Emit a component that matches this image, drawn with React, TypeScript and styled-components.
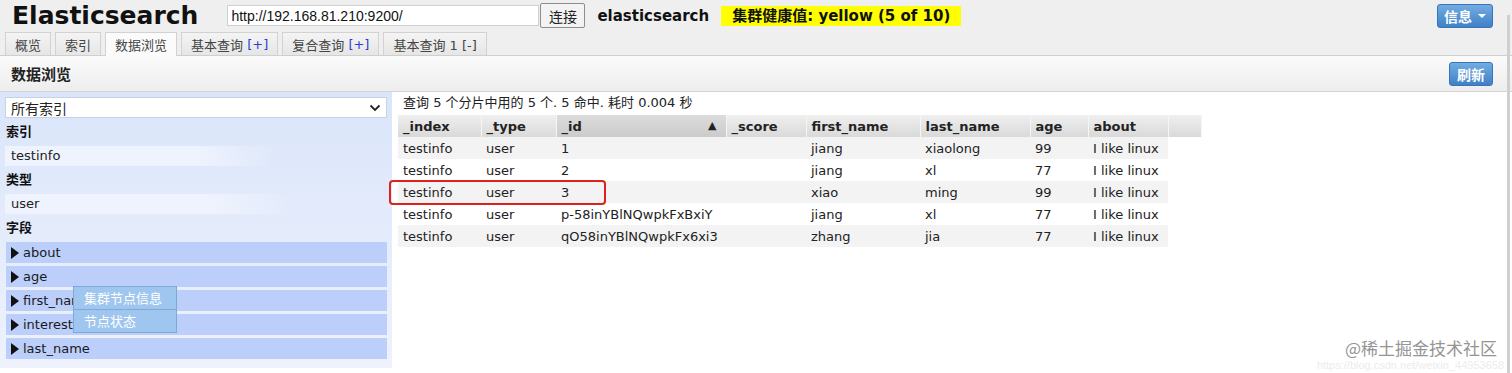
import React from 'react';
import styled, { createGlobalStyle } from 'styled-components';

const GlobalStyle = createGlobalStyle`
  html, body {
    margin: 0;
    padding: 0;
    background: #ffffff;
  }
  body {
    font-family: "DejaVu Sans", "Noto Sans CJK SC", sans-serif;
    font-size: 13px;
    color: #222;
    width: 1512px;
    height: 373px;
    overflow: hidden;
  }
`;

const Page = styled.div`
  position: relative;
  width: 1512px;
  height: 373px;
  display: flex;
  flex-direction: column;
`;

const Header = styled.div`
  height: 55px;
  background: #efefef;
  border-bottom: 1px solid #cfcfcf;
  display: flex;
  flex-direction: column;
`;

const TopBar = styled.div`
  height: 31px;
  display: flex;
  align-items: center;
`;

const Title = styled.h1`
  margin: 0 0 0 12px;
  font-size: 25px;
  font-weight: bold;
  color: #111;
  line-height: 31px;
`;

const UrlInput = styled.input`
  margin-left: 29px;
  width: 312px;
  height: 21px;
  box-sizing: border-box;
  border: 1px solid #d0d0d0;
  background: #fff;
  font-family: "Liberation Sans", sans-serif;
  font-size: 14px;
  padding: 0 3px;
  color: #111;
`;

const PlainButton = styled.button`
  margin-left: 1px;
  height: 25px;
  width: 45px;
  padding: 0;
  background: #f3f3f3;
  border: 1px solid #8d8d8d;
  border-radius: 2px;
  font-family: "Noto Sans CJK SC", sans-serif;
  font-size: 14px;
  color: #222;
`;

const ClusterName = styled.span`
  margin-left: 12px;
  font-weight: bold;
  font-size: 15px;
  color: #111;
`;

const Health = styled.span`
  margin-left: 12px;
  background: #ffff00;
  height: 20px;
  line-height: 20px;
  padding: 0 11px;
  font-weight: bold;
  font-size: 15px;
  color: #111;
`;

const BlueButton = styled.button<{ $width: number }>`
  margin-left: auto;
  margin-right: 19px;
  height: 24px;
  width: ${(p) => p.$width}px;
  padding: 0;
  border: 1px solid #3a74b8;
  border-radius: 3px;
  background: linear-gradient(#72ace2, #3f80c7);
  color: #fff;
  font-family: "Noto Sans CJK SC", sans-serif;
  font-weight: bold;
  font-size: 14px;
  display: flex;
  align-items: center;
  justify-content: center;
  gap: 6px;
`;

const Caret = styled.span`
  display: inline-block;
  width: 0;
  height: 0;
  border-left: 4px solid transparent;
  border-right: 4px solid transparent;
  border-top: 4px solid #fff;
`;

const Tabs = styled.div`
  height: 24px;
  display: flex;
  align-items: flex-end;
  padding-left: 5px;
  gap: 4px;
`;

const Tab = styled.div<{ $active?: boolean }>`
  box-sizing: border-box;
  padding: 0 9px;
  border: 1px solid #d2d2d2;
  border-bottom: none;
  background: ${(p) => (p.$active ? '#fbfbfb' : 'linear-gradient(#f4f4f4, #e6e6e6)')};
  margin-bottom: ${(p) => (p.$active ? '-1px' : '0')};
  height: ${(p) => (p.$active ? '24px' : '23px')};
  display: flex;
  align-items: center;
  font-size: 13px;
  color: #444;
  white-space: pre;
`;

const Plus = styled.span`
  color: #2a3fd0;
`;

const Toolbar = styled.div`
  height: 35px;
  background: linear-gradient(#fbfbfb, #ededed);
  border-bottom: 1px solid #d4d4d4;
  display: flex;
  align-items: center;
`;

const ToolbarTitle = styled.span`
  margin-left: 11px;
  font-weight: bold;
  font-size: 15px;
  color: #222;
`;

const Body = styled.div`
  flex: 1;
  display: flex;
  min-height: 0;
`;

const Sidebar = styled.div`
  width: 392px;
  height: 276px;
  box-sizing: border-box;
  padding: 5px 5px 0 5px;
  background: linear-gradient(#dae5fa, #eef2fd);
  display: flex;
  flex-direction: column;
`;

const SelectBox = styled.div`
  height: 21px;
  box-sizing: border-box;
  border: 1px solid #c9d2e2;
  background: #fff;
  display: flex;
  align-items: center;
  justify-content: space-between;
  padding: 0 5px;
  margin-bottom: 2px;
  font-family: "Noto Sans CJK SC", sans-serif;
  font-size: 14px;
  color: #222;
`;

const SectionLabel = styled.div`
  height: 24px;
  line-height: 24px;
  padding-left: 1px;
  font-weight: bold;
  font-size: 13px;
  color: #111;
`;

const FilterItem = styled.div`
  height: 24px;
  display: flex;
  align-items: center;
`;

const FilterChip = styled.span<{ $w: number }>`
  width: ${(p) => p.$w}px;
  height: 20px;
  line-height: 20px;
  padding-left: 6px;
  background: linear-gradient(90deg, #eff3fd 70%, rgba(239, 243, 253, 0));
  font-size: 13px;
  color: #222;
`;

const FieldList = styled.div`
  position: relative;
  display: flex;
  flex-direction: column;
  gap: 3px;
  margin-top: 2px;
  margin-left: 1px;
`;

const FieldRow = styled.div`
  height: 21px;
  background: #bccffb;
  display: flex;
  align-items: center;
  padding-left: 5px;
  font-size: 13px;
  color: #1a1a1a;
  gap: 4px;
`;

const Arrow = styled.span`
  display: inline-block;
  width: 0;
  height: 0;
  border-top: 6px solid transparent;
  border-bottom: 6px solid transparent;
  border-left: 8px solid #111;
`;

const Menu = styled.div`
  position: absolute;
  left: 67px;
  top: 44px;
  width: 102px;
  border: 1px solid #7ea9d6;
  background: #9fc6ee;
  display: flex;
  flex-direction: column;
`;

const MenuItem = styled.div`
  height: 22px;
  line-height: 22px;
  padding-left: 10px;
  color: #fff;
  font-family: "Noto Sans CJK SC", sans-serif;
  font-size: 13px;
  & + & {
    border-top: 1px solid #7ea9d6;
  }
`;

const Results = styled.div`
  flex: 1;
  padding-left: 6px;
  display: flex;
  flex-direction: column;
`;

const Summary = styled.div`
  height: 23px;
  line-height: 22px;
  padding-left: 5px;
  font-size: 13px;
  color: #222;
`;

const Table = styled.table`
  border-collapse: collapse;
  table-layout: fixed;
  width: 803px;
  font-size: 13px;
`;

const Th = styled.th<{ $w: number; $sorted?: boolean }>`
  width: ${(p) => p.$w}px;
  height: 22px;
  box-sizing: border-box;
  padding: 0 5px;
  text-align: left;
  font-weight: bold;
  color: #222;
  background: ${(p) => (p.$sorted ? 'linear-gradient(#dcdcdc, #cbcbcb)' : 'linear-gradient(#efefef, #d9d9d9)')};
  border-right: 1px solid #f6f6f6;
  position: relative;
`;

const SortMark = styled.span`
  position: absolute;
  right: 9px;
  top: 4px;
  font-size: 11px;
`;

const Row = styled.tr<{ $odd: boolean }>`
  height: 22px;
  & > td {
    background: ${(p) => (p.$odd ? '#f3f3f3' : '#ffffff')};
  }
  & > td:last-child {
    background: #fff;
  }
`;

const Td = styled.td`
  padding: 0 5px;
  color: #222;
  white-space: nowrap;
  overflow: hidden;
`;

const Highlight = styled.div`
  position: absolute;
  left: 389px;
  top: 180px;
  width: 217px;
  height: 25px;
  box-sizing: border-box;
  border: 2px solid #e0201c;
  border-radius: 4px;
  pointer-events: none;
`;

const ScrollEdge = styled.div`
  position: absolute;
  left: 1507px;
  top: 15px;
  bottom: 0;
  width: 3px;
  background: #cfcfcf;
`;

const Watermark = styled.div`
  position: absolute;
  right: 15px;
  bottom: 15px;
  text-align: right;
  font-family: "Noto Sans CJK SC", sans-serif;
  font-size: 17px;
  color: #959595;
  line-height: 20px;
`;

const WatermarkUrl = styled.div`
  position: absolute;
  right: 8px;
  bottom: 1px;
  font-family: "Liberation Sans", sans-serif;
  font-size: 11px;
  line-height: 13px;
  color: #ececec;
`;

const columns = [
  { key: '_index', w: 83 },
  { key: '_type', w: 75 },
  { key: '_id', w: 170, sorted: true },
  { key: '_score', w: 80 },
  { key: 'first_name', w: 114 },
  { key: 'last_name', w: 110 },
  { key: 'age', w: 58 },
  { key: 'about', w: 80 },
  { key: '', w: 33 },
];

const rows = [
  ['testinfo', 'user', '1', '', 'jiang', 'xiaolong', '99', 'I like linux'],
  ['testinfo', 'user', '2', '', 'jiang', 'xl', '77', 'I like linux'],
  ['testinfo', 'user', '3', '', 'xiao', 'ming', '99', 'I like linux'],
  ['testinfo', 'user', 'p-58inYBlNQwpkFxBxiY', '', 'jiang', 'xl', '77', 'I like linux'],
  ['testinfo', 'user', 'qO58inYBlNQwpkFx6xi3', '', 'zhang', 'jia', '77', 'I like linux'],
];

const fields = ['about', 'age', 'first_name', 'interests', 'last_name'];

export default function App() {
  return (
    <>
      <GlobalStyle />
      <Page>
        <Header>
          <TopBar>
            <Title>Elasticsearch</Title>
            <UrlInput defaultValue="http://192.168.81.210:9200/" />
            <PlainButton>连接</PlainButton>
            <ClusterName>elasticsearch</ClusterName>
            <Health>集群健康值: yellow (5 of 10)</Health>
            <BlueButton $width={56}>
              信息 <Caret />
            </BlueButton>
          </TopBar>
          <Tabs>
            <Tab>概览</Tab>
            <Tab>索引</Tab>
            <Tab $active>数据浏览</Tab>
            <Tab>
              基本查询 <Plus>[+]</Plus>
            </Tab>
            <Tab>
              复合查询 <Plus>[+]</Plus>
            </Tab>
            <Tab>基本查询 1 [-]</Tab>
          </Tabs>
        </Header>

        <Toolbar>
          <ToolbarTitle>数据浏览</ToolbarTitle>
          <BlueButton $width={44}>刷新</BlueButton>
        </Toolbar>

        <Body>
          <Sidebar>
            <SelectBox>
              <span>所有索引</span>
              <svg width="12" height="8" viewBox="0 0 12 8">
                <path d="M1.5 1.5 L6 6 L10.5 1.5" stroke="#222" strokeWidth="1.8" fill="none" />
              </svg>
            </SelectBox>
            <SectionLabel>索引</SectionLabel>
            <FilterItem>
              <FilterChip $w={264}>testinfo</FilterChip>
            </FilterItem>
            <SectionLabel>类型</SectionLabel>
            <FilterItem>
              <FilterChip $w={284}>user</FilterChip>
            </FilterItem>
            <SectionLabel>字段</SectionLabel>
            <FieldList>
              {fields.map((f) => (
                <FieldRow key={f}>
                  <Arrow />
                  {f}
                </FieldRow>
              ))}
              <Menu>
                <MenuItem>集群节点信息</MenuItem>
                <MenuItem>节点状态</MenuItem>
              </Menu>
            </FieldList>
          </Sidebar>

          <Results>
            <Summary>查询 5 个分片中用的 5 个. 5 命中. 耗时 0.004 秒</Summary>
            <Table>
              <thead>
                <tr>
                  {columns.map((c, i) => (
                    <Th key={i} $w={c.w} $sorted={c.sorted}>
                      {c.key}
                      {c.sorted && <SortMark>▲</SortMark>}
                    </Th>
                  ))}
                </tr>
              </thead>
              <tbody>
                {rows.map((r, i) => (
                  <Row key={i} $odd={i % 2 === 0}>
                    {r.map((cell, j) => (
                      <Td key={j}>{cell}</Td>
                    ))}
                    <Td />
                  </Row>
                ))}
              </tbody>
            </Table>
          </Results>
        </Body>

        <Highlight />
        <ScrollEdge />
        <Watermark>@稀土掘金技术社区</Watermark>
        <WatermarkUrl>https://blog.csdn.net/weixin_44953658</WatermarkUrl>
      </Page>
    </>
  );
}
